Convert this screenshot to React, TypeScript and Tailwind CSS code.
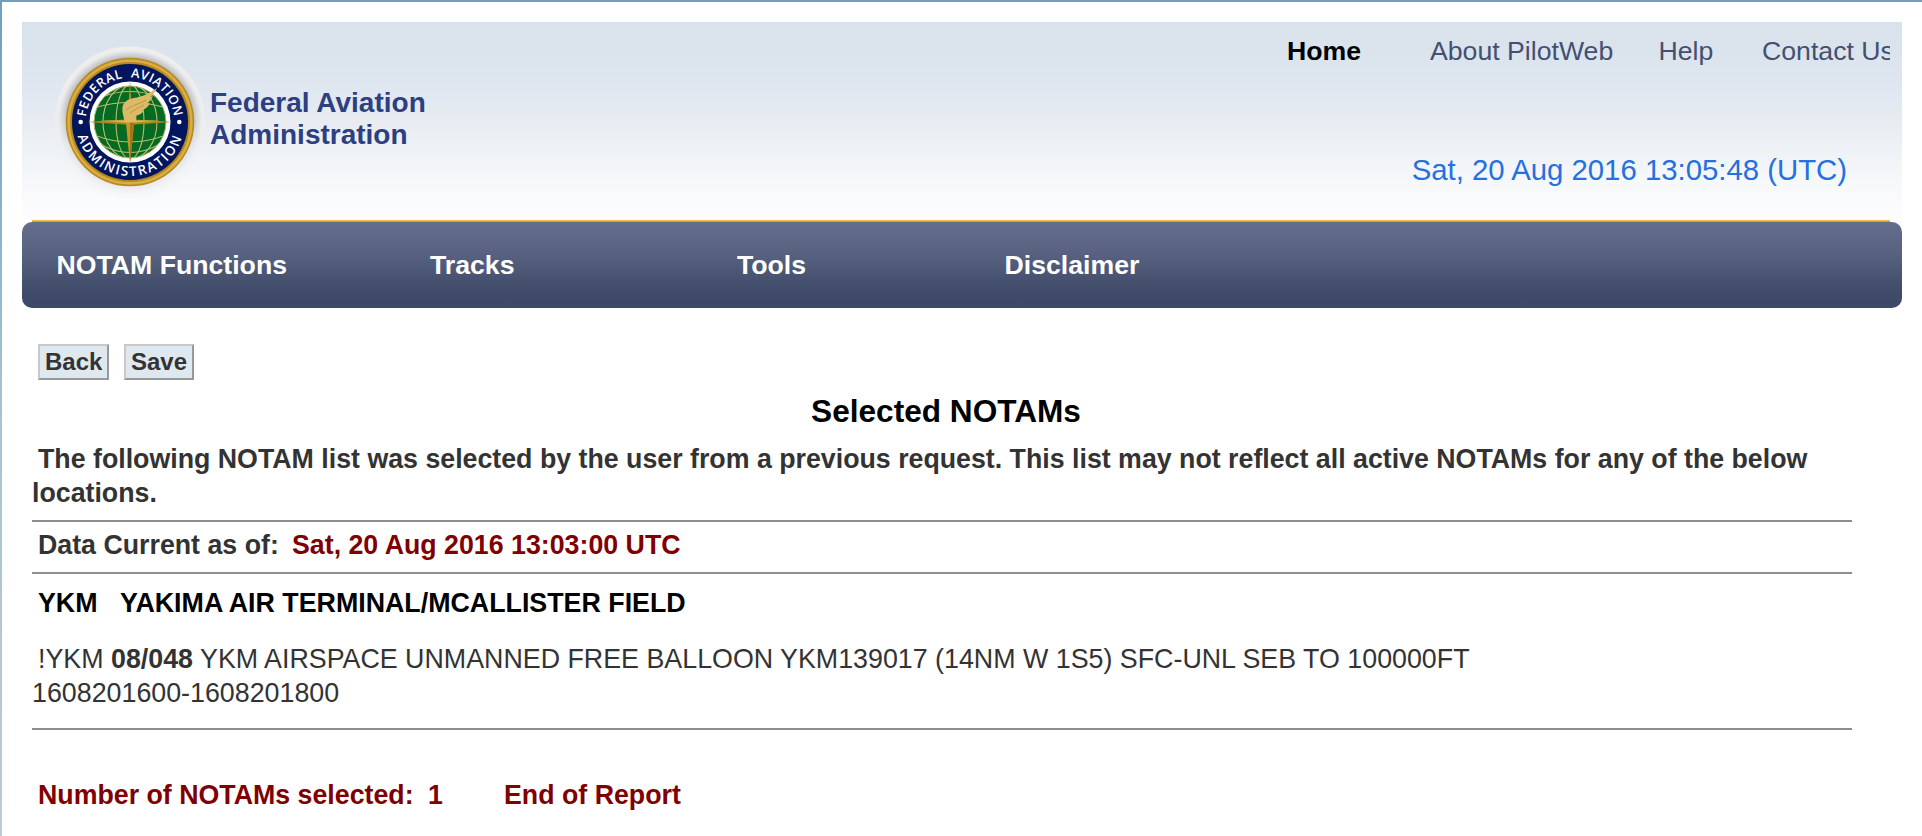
import React from "react";

function Seal() {
  return (
    <svg width="164" height="164" viewBox="-82 -82 164 164" className="block overflow-visible">
      <defs>
        <radialGradient id="halo" cx="0" cy="0" r="77" gradientUnits="userSpaceOnUse">
          <stop offset="0.82" stopColor="#b4b6b9" />
          <stop offset="0.88" stopColor="#d4d5d8" />
          <stop offset="0.93" stopColor="#ececed" />
          <stop offset="0.97" stopColor="#efefef" />
          <stop offset="1" stopColor="#e2e6eb" stopOpacity="0" />
        </radialGradient>
        <linearGradient id="fade" x1="0" y1="-78" x2="0" y2="78" gradientUnits="userSpaceOnUse">
          <stop offset="0" stopColor="#fff" />
          <stop offset="0.35" stopColor="#fff" />
          <stop offset="0.65" stopColor="#fff" stopOpacity="0.3" />
          <stop offset="1" stopColor="#fff" stopOpacity="0.2" />
        </linearGradient>
        <mask id="haloMask" maskUnits="userSpaceOnUse" x="-82" y="-82" width="164" height="164">
          <rect x="-82" y="-82" width="164" height="164" fill="url(#fade)" />
        </mask>
        <clipPath id="globe">
          <circle r="36" />
        </clipPath>
        <path id="arcTop" d="M-44.5 0A44.5 44.5 0 0 1 44.5 0" />
        <path id="arcBottom" d="M-54 0A54 54 0 0 0 54 0" />
      </defs>
      <circle cx="-1" cy="1" r="77" fill="url(#halo)" mask="url(#haloMask)" />
      <circle r="64.3" fill="#b98a1e" />
      <circle r="61.3" fill="none" stroke="#d9ae45" strokeWidth="2.6" />
      <circle r="58.6" fill="#a8821f" />
      <circle r="58" fill="#02155e" />
      <circle r="40.5" fill="#fff" />
      <circle r="36" fill="#056a22" stroke="#a9b87c" strokeWidth="1" />
      <g clipPath="url(#globe)" fill="none" stroke="#b9bd72" strokeWidth="1.1">
        <ellipse rx="14" ry="37" />
        <ellipse rx="27" ry="37" />
        <path d="M-36 -14Q0 -25 36 -14M-28 -25Q0 -36 28 -25M-36 13Q0 27 36 13M-30 22Q0 39 30 22" />
      </g>
      <path d="M0-42L1.8-12H-1.8ZM-43 0L-5-2.4H5L43 0L5 2.4H-5Z" fill="#b78718" />
      <path d="M0 42L-4.2 0H4.2Z" fill="#c4962b" />
      <path d="M0 42L0 0H4.2Z" fill="#a87412" />
      <path d="M-30-1.4H30L4 .6H-4Z" fill="#dcbc68" />
      <path
        d="M-5.5 0C-6-5-8-9-7.6-14C-7-20-2-23 4-24C12-25 20-29 27-34C25-30 23-27 20-25L23-26C21-22 19-20 17-18.5L20-19C18-15 15-13 12-11.5L14-11C11-8 9-7 6.5-6.5L6 0Z"
        fill="#dcba68"
      />
      <path d="M-4-12C2-17 10-18 16-22M0-9C5-13 9-14 14-17" fill="none" stroke="#bd9540" strokeWidth="1" />
      <g fill="#fff" fontFamily="'Open Sans', 'Noto Sans', sans-serif" fontSize="12.8" fontWeight="600" textAnchor="middle">
        <text letterSpacing="0.5" wordSpacing="4">
          <textPath href="#arcTop" startOffset="50%">FEDERAL AVIATION</textPath>
        </text>
        <text fontSize="13.4" letterSpacing="1.9">
          <textPath href="#arcBottom" startOffset="50%">ADMINISTRATION</textPath>
        </text>
      </g>
      <circle cx="-49.3" cy="0" r="2.3" fill="#fff" />
      <circle cx="49.3" cy="0" r="2.3" fill="#fff" />
    </svg>
  );
}

function Header() {
  return (
    <header className="flex h-[198px] justify-between bg-[linear-gradient(to_bottom,#d8e2ea_0%,#dde5ee_25%,#e2e8f1_38%,#e9edf1_52%,#f1f4f7_70%,#f9fafc_88%,#fdfdff_100%)]">
      <div className="flex">
        <div className="ml-[26px] mt-[18px] h-[164px] w-[162px]">
          <Seal />
        </div>
        <div className="mt-[65px] text-[28px] leading-[32px] font-bold text-[#2d3f82]">
          <div>Federal Aviation</div>
          <div>Administration</div>
        </div>
      </div>
      <div className="mr-[12px] w-[603px] overflow-hidden pt-[13px] whitespace-nowrap">
        <nav className="flex h-[32px] w-[640px] text-[26.67px] leading-[32px] text-[#435072]">
          <a className="w-[143px] font-bold text-black">Home</a>
          <a className="w-[228.5px]">About PilotWeb</a>
          <a className="w-[103.5px]">Help</a>
          <a>Contact Us</a>
        </nav>
        <div className="mt-[86px] pr-[43px] text-right text-[29.33px] leading-[34px] text-[#2470e0]">
          Sat, 20 Aug 2016 13:05:48 (UTC)
        </div>
      </div>
    </header>
  );
}

function MenuBar() {
  return (
    <div>
      <div className="mr-[12px] ml-[10px] h-[2px] bg-[linear-gradient(to_bottom,#ecc24a_50%,#dba318_50%)]" />
      <nav className="flex h-[86px] items-center rounded-[10px] bg-[linear-gradient(to_bottom,#646d8b_0%,#596381_35%,#475371_65%,#3f4a69_85%,#3d4968_100%)] pl-[34.5px] text-[26.67px] leading-[32px] font-bold text-white">
        <a className="w-[373.5px]">NOTAM Functions</a>
        <a className="w-[307px]">Tracks</a>
        <a className="w-[267.5px]">Tools</a>
        <a>Disclaimer</a>
      </nav>
    </div>
  );
}

function ToolButton({ children }: { children: React.ReactNode }) {
  return (
    <button className="flex h-[36px] items-center border-2 border-t-[#c8c8c8] border-r-[#989898] border-b-[#989898] border-l-[#c8c8c8] bg-[#dfe7ef] px-[5px] pb-px text-[24px] leading-[28px] font-bold">
      {children}
    </button>
  );
}

function Rule() {
  return <div className="h-[2px] bg-[#8e8e8e]" />;
}

export default function App() {
  return (
    <div className="h-[836px] w-[1922px] overflow-hidden bg-[linear-gradient(to_bottom,#6f9fbd_0%,#8fb3ca_28%,#a9c2d2_50%,#bccad8_100%)] pt-[2px] pl-[2px] font-['Liberation_Sans',Arial,sans-serif]">
      <div className="h-full bg-white pt-[20px] pr-[20px] pl-[20px]">
        <Header />
        <MenuBar />
        <main className="mr-[50px] ml-[10px] pt-[36px] text-[26.76px] leading-[34px] text-[#333]">
          <div className="flex gap-[14.6px] pl-[6px]">
            <ToolButton>Back</ToolButton>
            <ToolButton>Save</ToolButton>
          </div>
          <h1 className="mt-[12px] mr-[-8px] text-center text-[31.6px] leading-[38px] font-bold text-black">Selected NOTAMs</h1>
          <p className="mt-[12px] indent-[6px] font-bold">
            The following NOTAM list was selected by the user from a previous request. This list may not reflect all active NOTAMs for any of the below
            locations.
          </p>
          <div className="h-[10px]" />
          <Rule />
          <p className="flex h-[50px] items-center pb-[4px] pl-[6px] font-bold">
            <span className="w-[254px]">Data Current as of:</span>
            <span className="text-[#800000]">Sat, 20 Aug 2016 13:03:00 UTC</span>
          </p>
          <Rule />
          <h2 className="mt-[12px] flex pl-[6px] text-[26.8px] font-bold text-black">
            <span className="w-[82px]">YKM</span>
            <span>YAKIMA AIR TERMINAL/MCALLISTER FIELD</span>
          </h2>
          <p className="mt-[22px] w-[1500px] indent-[6px] text-[26.82px]">
            !YKM <b>08/048</b> YKM AIRSPACE UNMANNED FREE BALLOON YKM139017 (14NM W 1S5) SFC-UNL SEB TO 100000FT 1608201600-1608201800
          </p>
          <div className="h-[18px]" />
          <Rule />
          <p className="mt-[48px] flex pl-[6px] font-bold text-[#800000]">
            <span className="w-[390px]">Number of NOTAMs selected:</span>
            <span className="w-[76px]">1</span>
            <span>End of Report</span>
          </p>
        </main>
      </div>
    </div>
  );
}
